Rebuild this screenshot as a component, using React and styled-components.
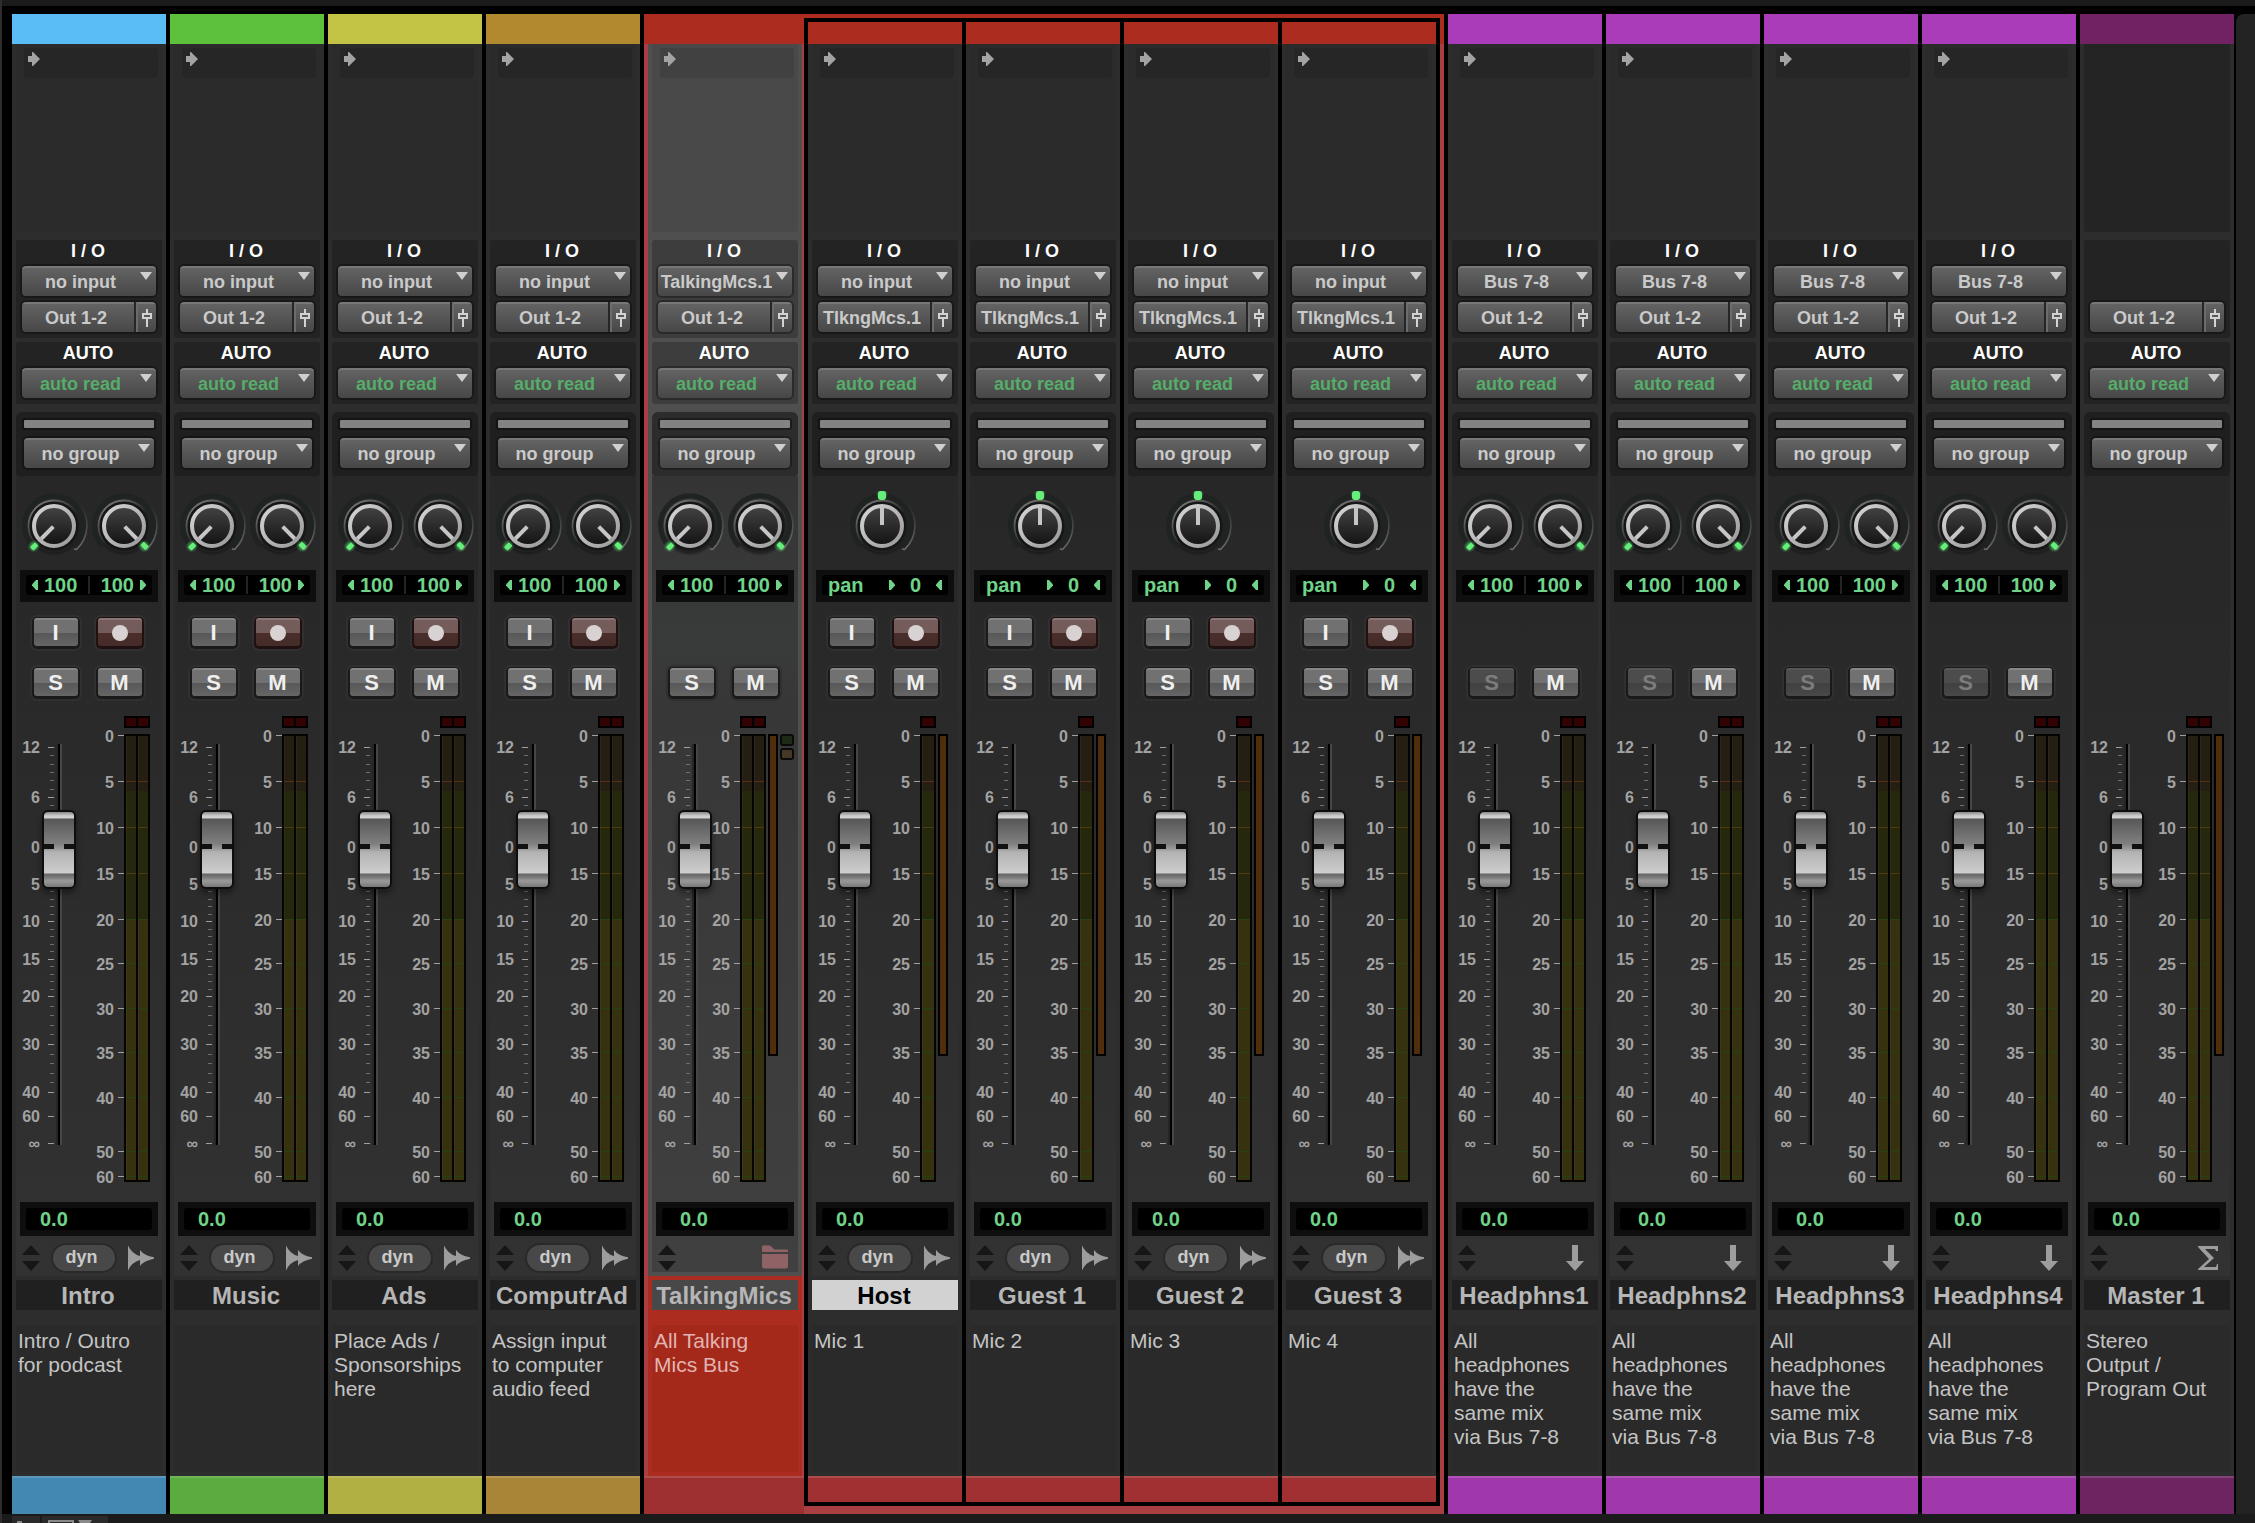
import React, { useState } from 'react'
import styled, { createGlobalStyle, css } from 'styled-components'

const FOLDER = '#ac2c20'
const EDGE = '#a93e43'

const strips = {
  left: [
    { name: 'Intro', top: '#5bbdf6', bottom: '#4388b2', note: 'Intro / Outro\nfor podcast' },
    { name: 'Music', top: '#5dc13c', bottom: '#5aac3e', note: '' },
    { name: 'Ads', top: '#c3c445', bottom: '#b0b043', note: 'Place Ads /\nSponsorships\nhere' },
    { name: 'ComputrAd', top: '#b38930', bottom: '#a98637', note: 'Assign input\nto computer\naudio feed' },
  ],
  folder: { name: 'TalkingMics', kind: 'folder', input: 'TalkingMcs.1', top: FOLDER, bottom: '#9f3032', note: 'All Talking\nMics Bus' },
  members: [
    { name: 'Host', note: 'Mic 1', selected: true },
    { name: 'Guest 1', note: 'Mic 2' },
    { name: 'Guest 2', note: 'Mic 3' },
    { name: 'Guest 3', note: 'Mic 4' },
  ].map((m) => ({ ...m, kind: 'mono', output: 'TlkngMcs.1', top: FOLDER, bottom: '#a03032' })),
  right: [
    ...[1, 2, 3, 4].map((n) => ({
      name: `Headphns${n}`,
      kind: 'aux',
      input: 'Bus 7-8',
      top: '#ab3cb9',
      bottom: '#a038ab',
      note: 'All\nheadphones\nhave the\nsame mix\nvia Bus 7-8',
    })),
    { name: 'Master 1', kind: 'master', top: '#712262', bottom: '#6d2562', note: 'Stereo\nOutput /\nProgram Out' },
  ],
}

// [label, y] of the tick, counted from the top of the fader track
const faderMarks = [['12', 3], ['6', 53], ['0', 103], ['5', 140], ['10', 177], ['15', 215], ['20', 252], ['30', 300], ['40', 348], ['60', 372], ['∞', 399]]
const faderSteps = [6, 6, 5, 5, 5, 5, 5, 5, 1, 1]

// same, counted from the top of the meter
const meterMarks = [['0', 1], ['5', 47], ['10', 93], ['15', 139], ['20', 185], ['25', 229], ['30', 274], ['35', 318], ['40', 363], ['50', 417], ['60', 442]]

function Scale({ marks, top }) {
  return (
    <Labels $top={top}>
      {marks.map(([label, y], i) => (
        <span key={label} style={{ height: i < marks.length - 1 ? marks[i + 1][1] - y : 18 }}>{label}</span>
      ))}
    </Labels>
  )
}

function Fader({ name }) {
  const [level, setLevel] = useState(256)
  const minor = []
  faderSteps.forEach((n, i) => {
    const a = faderMarks[i][1]
    const b = faderMarks[i + 1][1]
    for (let k = 1; k < n; k++) minor.push(Math.round(a + ((b - a) * k) / n))
  })
  return (
    <Well>
      <svg width="34" height="401" aria-hidden="true">
        {faderMarks.map(([label, y]) => <rect key={label} x="6" y={y} width="6" height="1" fill="#a0a0a0" />)}
        {minor.map((y) => <rect key={y} x="8" y={y} width="4" height="1" fill="#6e6e6e" />)}
      </svg>
      <Slider type="range" min="0" max="322" value={level} onChange={(e) => setLevel(e.target.value)} aria-label={`${name} volume`} />
    </Well>
  )
}

function Meter({ channels }) {
  const w = channels === 2 ? 10 : 12
  const full = channels * (w + 2) + 2
  const bars = channels === 2 ? [2, 14] : [2]
  return (
    <MeterStack>
      <svg width={full} height="12" aria-hidden="true">
        <rect width={full} height="12" fill="#000" />
        {bars.map((x) => <rect key={x} x={x} y="2" width={w} height="8" fill="#330303" />)}
      </svg>
      <svg width={full} height="448" aria-hidden="true">
        <rect width={full} height="448" fill="#050400" />
        {bars.map((x) => (
          <g key={x}>
            <rect x={x} y="2" width={w} height="55" fill="#251f13" />
            <rect x={x} y="57" width={w} height="128" fill="#25280c" />
            <rect x={x} y="185" width={w} height="261" fill="#36310e" />
            <rect x={x} y="2" width="1" height="444" fill="#fff" opacity="0.04" />
            {meterMarks.slice(1).map(([label, y], i) => (
              <rect key={label} x={x} y={y} width={w} height="1" fill={i < 1 ? '#5a3014' : i < 3 ? '#4f3b10' : '#264212'} />
            ))}
          </g>
        ))}
      </svg>
    </MeterStack>
  )
}

function Knob({ angle }) {
  const led = angle === 0
  return (
    <svg width="70" height="70" viewBox="0 0 70 70" aria-hidden="true">
      <circle cx="35" cy="37" r="28" fill="url(#knobShade)" />
      <path d="M14.5 55.5A29.5 29.5 0 1 1 55.5 55.5" fill="none" stroke="#1f2321" strokeWidth="5" />
      <path d="M60 13A33 33 0 0 1 57.5 58.5L55 58" fill="none" stroke="url(#knobEdge)" strokeWidth="1.6" />
      <circle cx="35" cy="35" r="25.5" fill="#161616" stroke="url(#knobLip)" strokeWidth="1.8" />
      <circle cx="35" cy="35" r="20" fill="url(#knobFace)" stroke="url(#knobRing)" strokeWidth="4" />
      <g transform={`rotate(${angle} 35 35)`}>
        <rect x="33" y="17" width="4" height="17" fill="#c6c6c6" />
      </g>
      <g transform={`rotate(${led ? 0 : angle} 35 35)`}>
        <rect x="29" y={led ? -3 : 0} width="12" height="13" rx="6" fill="url(#ledGlow)" />
        <rect x={led ? 31 : 32} y={led ? 0 : 3} width={led ? 8 : 5} height={led ? 9 : 7} rx={led ? 3 : 1} fill="#66ee7a" />
      </g>
    </svg>
  )
}

function ArrowMark({ left }) {
  return (
    <svg width="6" height="10" aria-hidden="true">
      <path d={left ? 'M6 0V10H4L0 5.500V4.500L4 0Z' : 'M0 0V10H2L6 5.500V4.500L2 0Z'} fill="#6fd389" />
    </svg>
  )
}

function KindIcon({ kind }) {
  if (kind === 'folder') {
    return (
      <svg width="28" height="26" viewBox="0 0 28 26">
        <path d="M0 7V1.5Q0 .5 1 .5H8L12.5 4.5H25Q26 4.5 26 5.5V7Z" fill="#8f6265" />
        <path d="M0 9H26V21Q26 23.500 23.500 23.500H2.500Q0 23.500 0 21Z" fill="#8f6265" />
      </svg>
    )
  }
  if (kind === 'aux') {
    return (
      <svg width="26" height="26" viewBox="0 0 26 26">
        <path d="M8 0H14V16H20L11 26L2 16H8Z" fill="#9d9d9d" />
      </svg>
    )
  }
  if (kind === 'master') {
    return (
      <svg width="26" height="26" viewBox="0 0 26 26">
        <path d="M2 1H22V6H20L19 4H9L18 13L8 22H20L21 19H22V25H2V24L13 14L2 2Z" fill="#9d9d9d" />
      </svg>
    )
  }
  return (
    <svg width="26" height="26" viewBox="0 0 26 26">
      <path d="M0 .5Q4 9 12 11V5Q16 10.500 26 12.300V13.700Q16 15.500 12 21V15Q4 17 0 25.500Z" fill="#9d9d9d" />
    </svg>
  )
}

function Strip({ track }) {
  const { name, kind = 'audio', input = 'no input', output = 'Out 1-2', note } = track
  const folder = kind === 'folder'
  const master = kind === 'master'
  const mono = kind === 'mono'
  const hasInput = kind === 'audio' || mono
  const edges = { audio: 12, aux: 12, mono: 10, folder: 4, master: 6 }

  return (
    <Channel $folder={folder}>
      <ColorTop $color={track.top} $short={mono} />
      <Body $lit={folder}>
        <Inserts $lit={folder} $blank={master}>
          {!master && (
            <Slot>
              <svg width="12" height="14" aria-hidden="true">
                <path d="M0 4H4V0H5L12 7L5 14H4V10H0Z" fill="#a3a3a3" />
              </svg>
            </Slot>
          )}
        </Inserts>
        <Panel $lit={folder} $io>
          {!master && <Heading>I / O</Heading>}
          {!master && (
            <Picker>
              <select aria-label={`${name} input`} defaultValue={input}><option>{input}</option></select>
            </Picker>
          )}
          <OutRow>
            <OutButton type="button">{output}</OutButton>
            <SendButton type="button" aria-label={`${name} output window`}>
              <svg width="10" height="18">
                <path d="M5 0V5M5 9V18" stroke="#d2d2d2" strokeWidth="2" />
                <rect x="1" y="5" width="8" height="4" fill="none" stroke="#d2d2d2" strokeWidth="2" />
              </svg>
            </SendButton>
          </OutRow>
        </Panel>
        <Panel $lit={folder}>
          <Heading>AUTO</Heading>
          <Picker $green>
            <select aria-label={`${name} automation`}><option>auto read</option></select>
          </Picker>
        </Panel>
        <GroupPanel $lit={folder}>
          <GroupBar />
          <Picker>
            <select aria-label={`${name} group`}><option>no group</option></select>
          </Picker>
        </GroupPanel>

        <Lower $lit={folder}>
          <Knobs $single={mono}>
            {mono && <Knob angle={0} />}
            {!mono && !master && <><Knob angle={-135} /><Knob angle={135} /></>}
          </Knobs>
          {master && <Spacer />}
          {mono && (
            <Display>
              <Screen>
                <span>pan</span>
                <PanValue><ArrowMark /><span>0</span><ArrowMark left /></PanValue>
              </Screen>
            </Display>
          )}
          {!mono && !master && (
            <Display>
              <Screen>
                <Half><ArrowMark left />100</Half>
                <Split />
                <Half>100<ArrowMark /></Half>
              </Screen>
            </Display>
          )}
          <Keys>
            {hasInput && <Key type="button" aria-label={`${name} input monitor`}>I</Key>}
            {hasInput && <Key type="button" $rec aria-label={`${name} record`}><i /></Key>}
          </Keys>
          <Keys $second>
            {!master && <Key type="button" $dim={kind === 'aux'}>S</Key>}
            {!master && <Key type="button">M</Key>}
          </Keys>

          <Levels $edge={edges[kind]}>
            <FaderScale><Scale marks={faderMarks} top={23} /></FaderScale>
            <Fader name={name} />
            <MeterScale><Scale marks={meterMarks} top={12} /></MeterScale>
            <MeterTicks width="6" height="448" aria-hidden="true">
              {meterMarks.map(([label, y]) => <rect key={label} y={y} width="6" height="1" fill="#a0a0a0" />)}
            </MeterTicks>
            <Meter channels={mono ? 1 : 2} />
            {(mono || master || folder) && <Reduction />}
            {folder && <Lamps><i /><i /></Lamps>}
          </Levels>

          <Display $tall>
            <Screen $indent={hasInput ? 14 : 18}>0.0</Screen>
          </Display>
          <Tools>
            <svg width="18" height="26" aria-hidden="true">
              <path d="M9 0L18 10H0ZM9 26L18 16H0Z" fill="#161616" />
            </svg>
            {hasInput && <Dyn type="button">dyn</Dyn>}
            <KindIcon kind={kind} />
          </Tools>
        </Lower>
      </Body>
      <Foot $red={folder}>
        <Name $red={folder} $selected={track.selected}>{name}</Name>
        <Comments $red={folder}>{note}</Comments>
      </Foot>
      <ColorBottom $color={track.bottom} $short={mono} />
    </Channel>
  )
}

export default function App() {
  return (
    <Page>
      <GlobalStyle />
      <Gradients />
      <Console>
        <Mixer>
          {strips.left.map((t) => <Strip key={t.name} track={t} />)}
          <Group>
            <Strip track={strips.folder} />
            <Members>
              {strips.members.map((t) => <Strip key={t.name} track={t} />)}
            </Members>
          </Group>
          {strips.right.map((t) => <Strip key={t.name} track={t} />)}
        </Mixer>
        <Side />
      </Console>
      <BottomBar>
        <Tab $w={28}>
          <svg width="28" height="7"><path d="M5 7V5H10V7Z" fill="#8a8a8a" /></svg>
        </Tab>
        <Tab $w={66}>
          <svg width="66" height="7"><path d="M6 4H32V7H30V6H8V7H6ZM36 4H50L48 7H38Z" fill="#8a8a8a" /></svg>
        </Tab>
      </BottomBar>
    </Page>
  )
}

// paint shared by every knob
function Gradients() {
  return (
    <Defs width="0" height="0" aria-hidden="true">
      <defs>
        <radialGradient id="knobShade">
          <stop offset="0.8" stopColor="#101010" stopOpacity="0.9" />
          <stop offset="1" stopColor="#101010" stopOpacity="0" />
        </radialGradient>
        <linearGradient id="knobFace" x1="0" y1="0" x2="0" y2="1">
          <stop offset="0" stopColor="#444" />
          <stop offset="1" stopColor="#121212" />
        </linearGradient>
        <linearGradient id="knobRing" x1="0" y1="0" x2="1" y2="1">
          <stop offset="0" stopColor="#d6d6d6" />
          <stop offset="1" stopColor="#989898" />
        </linearGradient>
        <linearGradient id="knobLip" x1="0" y1="0" x2="0.8" y2="1">
          <stop offset="0" stopColor="#8a8a8a" />
          <stop offset="0.6" stopColor="#222" />
        </linearGradient>
        <linearGradient id="knobEdge" x1="0" y1="0" x2="0" y2="1">
          <stop offset="0" stopColor="#666" stopOpacity="0" />
          <stop offset="1" stopColor="#6c6c6c" />
        </linearGradient>
        <radialGradient id="ledGlow">
          <stop offset="0.3" stopColor="#4fd465" stopOpacity="0.7" />
          <stop offset="1" stopColor="#4fd465" stopOpacity="0" />
        </radialGradient>
      </defs>
    </Defs>
  )
}

const GlobalStyle = createGlobalStyle`
  * { box-sizing: border-box; }
  body {
    margin: 0;
    background: #1b1b1b;
    font-family: "Liberation Sans", Arial, sans-serif;
  }
  svg { display: block; flex: none; }
  button, select { font-family: inherit; }
`

const Page = styled.div`
  min-height: 100vh;
  display: flex;
  flex-direction: column;
  border-left: 2px solid #2d2d2d;
  padding-top: 6px;
`

const Defs = styled.svg`
  position: absolute;
`

const Console = styled.div`
  display: flex;
  padding: 8px 0 0 10px;
  background: #000;
`

const Mixer = styled.div`
  flex: 1;
  min-width: 0;
  display: flex;
  gap: 4px;
  padding-right: 2px;
`

const Side = styled.aside`
  width: 19px;
  background: #232323;
  border-top-left-radius: 8px;
`

const Group = styled.div`
  flex: 5 5 30px;
  min-width: 0;
  display: flex;
  padding-right: 4px;
  background: linear-gradient(${FOLDER} 30px, ${EDGE} 30px);
`

const Members = styled.div`
  flex: 4 4 20px;
  min-width: 0;
  display: flex;
  gap: 4px;
  margin: 4px 0 8px;
  border: 4px solid #000;
  background: #000;
`

const Channel = styled.section`
  flex: 1 1 ${(p) => (p.$folder ? '6px' : '0')};
  min-width: 0;
  display: flex;
  flex-direction: column;
`

const ColorTop = styled.div`
  height: ${(p) => (p.$short ? 22 : 30)}px;
  background: ${(p) => p.$color};
`

const ColorBottom = styled.div`
  height: ${(p) => (p.$short ? 26 : 38)}px;
  background: ${(p) => p.$color};
  border-top: 2px solid rgba(255, 255, 255, 0.14);
`

const Body = styled.div`
  padding: 0 4px;
  background: ${(p) => (p.$lit ? '#4f4f4f' : '#2d2d2d')};
  ${(p) => p.$lit && css`margin: 0 2px 0 4px;`}
`

const Inserts = styled.div`
  height: 188px;
  padding: 4px 4px 0 8px;
  border-radius: 0 0 3px 3px;
  background: ${(p) => (p.$lit ? '#494949' : p.$blank ? '#242424' : '#2b2b2b')};
`

const Slot = styled.div`
  height: 30px;
  padding: 4px;
  border-radius: 3px;
  background: rgba(0, 0, 0, 0.1);
`

const Panel = styled.div`
  display: flex;
  flex-direction: column;
  justify-content: flex-end;
  gap: 6px;
  height: ${(p) => (p.$io ? 98 : 62)}px;
  margin-top: ${(p) => (p.$io ? 8 : 4)}px;
  padding: 0 6px 6px;
  border-radius: 3px;
  background: ${(p) => (p.$lit ? '#3d3d3d' : '#232323')};
`

const GroupPanel = styled.div`
  height: 64px;
  margin-top: 8px;
  padding: 8px;
  border-radius: 6px 6px 3px 3px;
  background: ${(p) => (p.$lit ? '#2c2c2c' : '#1f1f1f')};
`

const GroupBar = styled.div`
  height: 8px;
  margin-bottom: 10px;
  border-radius: 1px;
  background: #838383;
  box-shadow: 0 0 0 2px rgba(0, 0, 0, 0.35);
`

const Heading = styled.div`
  height: 20px;
  line-height: 23px;
  padding-right: 2px;
  text-align: center;
  font-size: 18px;
  font-weight: bold;
  color: #fff;
`

const face = css`
  border: 0;
  border-top: 2px solid #777;
  background: linear-gradient(#636363, #474747);
  color: #cacaca;
  font-size: 18px;
  font-weight: bold;
`

const Picker = styled.label`
  position: relative;
  display: block;
  height: 30px;
  border-radius: 4px;
  box-shadow: 0 0 0 2px rgba(0, 0, 0, 0.3);

  select {
    ${face}
    appearance: none;
    display: block;
    width: 100%;
    height: 30px;
    padding: 0 17px 0 0;
    border-radius: 4px;
    text-align: center;
    text-align-last: center;
    outline: none;
    color: ${(p) => (p.$green ? '#55ad69' : '#cacaca')};
  }

  &::after {
    content: '';
    position: absolute;
    top: 6px;
    right: 4px;
    border: 6px solid transparent;
    border-top: 8px solid #cfcfcf;
    border-bottom: 0;
    pointer-events: none;
  }
`

const OutRow = styled.div`
  display: flex;
  gap: 2px;
  height: 30px;
  border-radius: 4px;
  overflow: hidden;
  background: #262626;
  outline: 2px solid rgba(0, 0, 0, 0.3);
`

const OutButton = styled.button`
  ${face}
  flex: 1;
  min-width: 0;
  padding: 0 4px 0 0;
`

const SendButton = styled.button`
  ${face}
  display: grid;
  place-items: center;
  width: 20px;
  padding: 0;
  border-left: 2px solid #6b6b6b;
`

const Lower = styled.div`
  height: ${(p) => (p.$lit ? 796 : 800)}px;
  margin-bottom: ${(p) => (p.$lit ? 4 : 0)}px;
  background: ${(p) => (p.$lit
    ? 'linear-gradient(#343434, #393b3a 160px, #373737 230px, #404040)'
    : 'linear-gradient(#272727, #292929 200px, #323232)')};
`

const Knobs = styled.div`
  display: flex;
  justify-content: center;
  height: 94px;
  padding: 15px ${(p) => (p.$single ? 6 : 0)}px 0 0;
`

const Spacer = styled.div`
  height: 32px;
`

const Display = styled.div`
  height: ${(p) => (p.$tall ? 34 : 32)}px;
  margin: 0 4px;
  padding: ${(p) => (p.$tall ? '6px' : '5px 6px 7px')};
  background: #0e0e0e;
`

const Screen = styled.div`
  display: flex;
  align-items: center;
  height: 100%;
  padding: 0 6px 0 ${(p) => p.$indent || 6}px;
  border-radius: 3px;
  background: #000;
  color: #6fd389;
  font-size: 20px;
  line-height: 20px;
  font-weight: bold;
`

const Half = styled.div`
  flex: 1;
  display: flex;
  align-items: center;
  gap: 6px;

  &:last-child {
    justify-content: flex-end;
  }
`

const Split = styled.div`
  width: 2px;
  height: 18px;
  background: #242424;
`

const PanValue = styled.div`
  display: flex;
  align-items: center;
  gap: 15px;
  margin-left: auto;
`

const Keys = styled.div`
  display: flex;
  justify-content: center;
  gap: 20px;
  height: 28px;
  margin-top: ${(p) => (p.$second ? 22 : 16)}px;
  padding-right: 2px;
`

const Key = styled.button`
  width: 44px;
  height: 28px;
  display: grid;
  place-items: center;
  padding: 0 1px 0 0;
  border: 0;
  border-top: 2px solid ${(p) => (p.$dim ? '#565656' : '#868686')};
  border-radius: 3px;
  background: linear-gradient(#717171 48%, #585858 52%, #666);
  box-shadow: 0 1px 0 2px #1a1a1a, 0 1px 0 4px #303030;
  color: #efefef;
  font-size: 22px;
  line-height: 26px;
  font-weight: bold;

  ${(p) => p.$dim && css`
    background: linear-gradient(#4c4c4c 48%, #414141 52%, #484848);
    color: #7c7c7c;
  `}

  ${(p) => p.$rec && css`
    border-top-color: #8a7775;
    background: linear-gradient(#735c5a 48%, #4b2e2b 52%, #432c29);
    box-shadow: 0 1px 0 2px #201010, 0 1px 0 4px #303030;
  `}

  i {
    width: 16px;
    height: 16px;
    border-radius: 50%;
    background: #d8d2d2;
  }
`

const Levels = styled.div`
  display: flex;
  align-items: flex-start;
  height: 486px;
  margin-top: 20px;
  padding-right: ${(p) => p.$edge}px;
`

const Labels = styled.div`
  padding-top: ${(p) => p.$top}px;
  color: #a2a2a2;
  font-size: 16px;
  font-weight: bold;
  line-height: 18px;
  text-align: right;

  span { display: block; }
`

const FaderScale = styled.div`
  flex: none;
  width: 24px;
  margin-right: 2px;
`

const MeterScale = styled.div`
  flex: 1;
  min-width: 0;
`

const Well = styled.div`
  flex: none;
  display: grid;
  margin-top: 28px;

  > * { grid-area: 1 / 1; }
`

const Slider = styled.input`
  appearance: none;
  writing-mode: vertical-lr;
  direction: rtl;
  width: 34px;
  height: 401px;
  margin: 0;
  outline: none;
  background: linear-gradient(to right, transparent 14px, #262626 14px 16px, #000 16px 18px, #464646 18px 20px, transparent 20px);

  &::-webkit-slider-thumb {
    appearance: none;
    width: 34px;
    height: 79px;
    border: 2px solid #0d0d0d;
    border-radius: 6px;
    box-shadow: 0 4px 6px rgba(0, 0, 0, 0.4);
    background:
      linear-gradient(#111, #111) 0 32px / 10px 5px no-repeat,
      linear-gradient(#111, #111) 100% 32px / 10px 5px no-repeat,
      linear-gradient(#888 0, #d0d0d0 4px, #d0d0d0 6px, #575757 7px, #808080 32px, #9a9a9a 37px, #b2b2b2 40px, #cecece 61px, #666 62px, #777 65px, #9a9a9a 69px, #777 75px);
  }
`

const MeterTicks = styled.svg`
  margin: 18px 0 0 4px;
`

const MeterStack = styled.div`
  flex: none;
  display: flex;
  flex-direction: column;
  gap: 6px;
`

const Reduction = styled.div`
  flex: none;
  width: 10px;
  height: 322px;
  margin: 18px 0 0 2px;
  border: 2px solid #000;
  background: #502e0c;
`

const Lamps = styled.div`
  flex: none;
  display: flex;
  flex-direction: column;
  gap: 2px;
  margin: 18px 0 0 2px;

  i {
    width: 14px;
    height: 12px;
    border: 2px solid #0a0a0a;
    border-radius: 3px;
    background: #1f2a16;
  }
  i + i { background: #463826; }
`

const Tools = styled.div`
  display: flex;
  align-items: center;
  justify-content: space-between;
  height: 40px;
  padding: 4px 8px 0 6px;
`

const Dyn = styled.button`
  width: 66px;
  height: 30px;
  padding: 0 5px 2px 0;
  border: 2px solid #292929;
  border-radius: 15px;
  background: #484848;
  color: #cacaca;
  font-size: 18px;
  font-weight: bold;
`

const Foot = styled.div`
  padding: 4px;
  background: ${(p) => (p.$red ? FOLDER : '#2d2d2d')};
  ${(p) => p.$red && css`margin: 0 2px 0 4px;`}
`

const Name = styled.h2`
  height: 30px;
  margin: 0 0 15px;
  padding-right: 2px;
  line-height: 31px;
  text-align: center;
  white-space: nowrap;
  font-size: 24px;
  font-weight: bold;
  background: ${(p) => (p.$selected ? '#d2d2d2' : p.$red ? '#484848' : '#202020')};
  color: ${(p) => (p.$selected ? '#000' : '#b6b6b6')};
`

const Comments = styled.p`
  height: 147px;
  margin: 0;
  padding: 4px 2px;
  white-space: pre-line;
  font-size: 21px;
  line-height: 24px;
  background: ${(p) => (p.$red ? '#a4291b' : '#2a2a2a')};
  color: ${(p) => (p.$red ? '#e2b4b1' : '#c4c4c4')};
`

const BottomBar = styled.footer`
  flex: 1;
  display: flex;
  align-items: flex-start;
  gap: 2px;
  min-height: 9px;
  margin-left: 8px;
  padding: 2px 0 0 2px;
  background: #1b1b1b;
`

const Tab = styled.div`
  width: ${(p) => p.$w}px;
  background: #2a2a2a;
`
